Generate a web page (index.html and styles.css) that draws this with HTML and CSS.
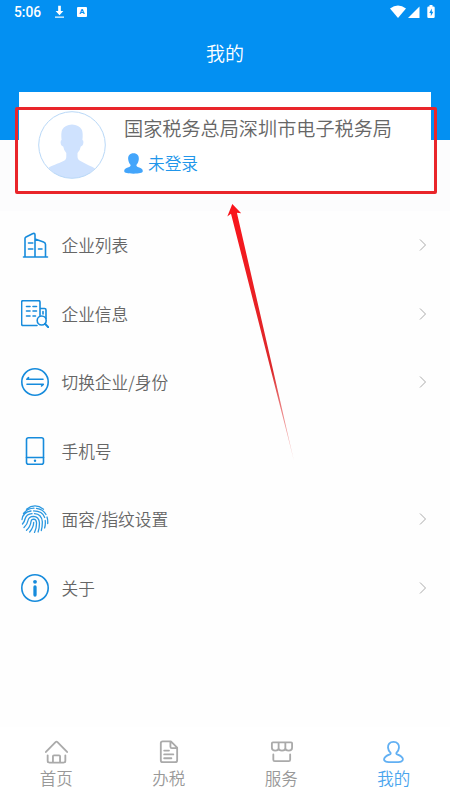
FILE: index.html
```
<!DOCTYPE html>
<html lang="zh-CN">
<head>
<meta charset="utf-8">
<meta name="viewport" content="width=device-width, initial-scale=1">
<title>我的</title>
<link rel="stylesheet" href="styles.css">
</head>
<body>
<div class="app">
  <header class="header">
    <div class="status">
      <span class="time">5:06</span>
      <svg class="download" viewBox="0 0 10 14"><path d="M3.500 0h3v6H9.300L5 10.500.7 6h2.800z" fill="currentColor"/><path d="M0 12.700h10" stroke="currentColor" stroke-width="1.300"/></svg>
      <span class="badge">A</span>
      <svg class="signals" viewBox="0 0 46 14">
        <path d="M0 3.500Q8 -2.500 16 3.500L8 13z" fill="currentColor"/>
        <path d="M29.500 1.500V13H18z" fill="currentColor"/>
        <path d="M39.500 1.500V0h3v1.500h1q1.200 0 1.200 1.200v9.100q0 1.200-1.200 1.200h-5q-1.200 0-1.200-1.200V2.700q0-1.200 1.200-1.200z" fill="currentColor"/>
        <path d="M41.800 3.500 39.300 8h1.500v3.200l2.500-4.500h-1.500z" fill="#0390f2"/>
      </svg>
    </div>
    <h1 class="title">我的</h1>
  </header>

  <section class="profile">
    <div class="card">
      <svg class="avatar" viewBox="0 0 68 68">
        <circle cx="34" cy="34" r="33.300" fill="#fff"/>
        <path d="M10.500 57C13 54.500 20 53 25.500 50q3-1.500 2.800-4.500V42q-2.300-2-3.100-6.500-2.400-.5-2.600-4-.1-2.500 1-2.500-.8-7 .6-10.200 2.800-5 9.800-5.300 7 .3 9.800 5.300 1.400 3.200.6 10.200 1.200 0 1 2.500-.3 3.500-2.600 4-.8 4.500-3.300 6.500v3.500q0 3 3 4.500 5.500 3 8.500 4.500 4 1.500 6 3Q48 67.300 34 67.300T10.500 57z" fill="#cfe2fe"/>
        <circle cx="34" cy="34" r="33.300" fill="none" stroke="#b9d8f7" stroke-width="1"/>
      </svg>
      <div class="info">
        <div class="name">国家税务总局深圳市电子税务局</div>
        <div class="login">
          <svg class="person" viewBox="0 0 20 22"><path d="M10 .3c4 0 5.900 2.500 5.600 6.200-.2 2.800-1.500 4.800-2.600 6 0 2 1.400 2 3.800 3 2.200.9 3.200 2 2.900 4C19.500 21 16 21.700 10 21.700S.5 21 .3 19.500c-.3-2 .7-3.100 2.900-4 2.400-1 3.800-1 3.800-3-1.100-1.200-2.400-3.200-2.600-6C4.100 2.800 6 .3 10 .3z" fill="currentColor"/></svg>
          <span>未登录</span>
        </div>
      </div>
    </div>
  </section>

  <ul class="menu">
    <li class="row">
      <svg class="icon" viewBox="0 0 28 28"><path d="M2.500 26h24M4 26V7.500Q4 6.500 5 6l6.500-3.300q2.500-1 2.500 1.300v22M14 8l8.500 3q2 .7 2 2.500V26M7.500 12h4.300M7.500 18h4.300M17.500 18H21"/></svg>
      <span class="label">企业列表</span><svg class="arrow" viewBox="0 0 8 12"><path d="M1 .5 6.500 6 1 11.500"/></svg>
    </li>
    <li class="row">
      <svg class="icon" viewBox="0 0 28 28"><path d="M16 25.500H2Q.6 25.500.6 24V2Q.6.600 2 .6h15.500q1.500 0 1.500 1.400v13.500M19 8.500h4.500q1.500 0 1.500 1.500v8.500M5.500 6.500H9M12 6.500h3.500M5.500 11H9M12 11h3.500M5.500 16H9M12 16h2.500M22 11.500v2.500"/><circle cx="20.700" cy="20.500" r="4.500"/><path d="m24 23.800 3.500 3.700" stroke-width="2"/></svg>
      <span class="label">企业信息</span><svg class="arrow" viewBox="0 0 8 12"><path d="M1 .5 6.500 6 1 11.500"/></svg>
    </li>
    <li class="row">
      <svg class="icon" viewBox="0 0 28 28"><circle cx="14" cy="14" r="13.200"/><path d="M7.500 9.600 5.800 11.300H22M6 16.300H22.300L20.500 18"/></svg>
      <span class="label">切换企业/身份</span><svg class="arrow" viewBox="0 0 8 12"><path d="M1 .5 6.500 6 1 11.500"/></svg>
    </li>
    <li class="row">
      <svg class="icon" viewBox="0 0 28 28"><rect x="5.500" y=".8" width="17" height="26.400" rx="2"/><path d="M5.500 20.500h17"/><circle cx="14" cy="23.800" r="1.200" fill="currentColor" stroke="none"/></svg>
      <span class="label">手机号</span>
    </li>
    <li class="row">
      <svg class="icon print" viewBox="0 0 28 28"><path d="M5.500 4.200Q14-2.300 22.500 4.200M2.500 8.500Q6.500 3.300 13 3.200M15.500 3.400Q22 4.300 25 9.500M1 14.500Q2 7 10 6M12.600 5.900Q21.500 6 23.700 12.500M26 12q1 3 .7 6.500M1.500 19Q3.600 16.500 4.200 13.500 5.500 9 11 8.600M13.500 8.600Q20.500 9 21.300 16.500 21.500 21 20.300 25.500M24.200 15.500Q24.700 19.500 23.600 23M3 22.500Q6.500 19 7 15.500q.8-4.200 5.500-4.200 5.300.2 5.900 6.200.2 5-1.300 9.500M5.500 25.200Q9.500 21.500 9.900 17q.4-2.900 2.800-2.900 2.500.2 2.800 3.400.2 5.500-2 10M8.700 27Q12.600 22.500 12.700 17.300"/></svg>
      <span class="label">面容/指纹设置</span><svg class="arrow" viewBox="0 0 8 12"><path d="M1 .5 6.500 6 1 11.500"/></svg>
    </li>
    <li class="row">
      <svg class="icon" viewBox="0 0 28 28"><circle cx="14" cy="14" r="13.200"/><circle cx="14" cy="7.800" r="1.900" fill="currentColor" stroke="none"/><path d="M14 13v8" stroke-width="3.300"/></svg>
      <span class="label">关于</span><svg class="arrow" viewBox="0 0 8 12"><path d="M1 .5 6.500 6 1 11.500"/></svg>
    </li>
  </ul>

  <nav class="tabs">
    <div class="tab"><svg viewBox="0 0 26 26"><path d="M2 13.500 12 3.200q1-.9 2 0l10 10.300M3.800 17v5.500q0 2 2 2h14.400q2 0 2-2V17M9.300 24.500V18q0-1 1-1h5.400q1 0 1 1v6.500"/></svg><span>首页</span></div>
    <div class="tab"><svg viewBox="0 0 26 26"><path d="M15.500 2.500H7q-2 0-2 2V22q0 2 2 2h13q2 0 2-2V9zM15 2.500V8q0 1.500 1.500 1.500H22M8.500 12h5M8.500 16H18M8.500 20H16"/></svg><span>办税</span></div>
    <div class="tab"><svg viewBox="0 0 26 26"><path d="M4 3.500h19q1 0 1 1V9q0 3-3.500 3T17 9.500V4M17 9.500Q17 12 13.500 12T10 9.500V4M10 9.500Q10 12 6.500 12T3 9V4.500q0-1 1-1M4.500 16v5.500q0 1.500 1.500 1.500h14.500q1.500 0 1.500-1.500V16"/></svg><span>服务</span></div>
    <div class="tab active"><svg viewBox="0 0 26 26"><path d="M13 3c4 0 6 2.700 5.700 6-.2 2.500-1.200 4-2.500 5.200-.6.700-.2 1.400.6 1.700 3.200 1.100 5.700 2.400 6 5.100.2 2.500-2 3-9.800 3s-10-.5-9.800-3c.3-2.700 2.800-4 6-5.100.8-.3 1.200-1 .6-1.700C8.500 13 7.500 11.500 7.300 9 7 5.700 9 3 13 3z"/></svg><span>我的</span></div>
  </nav>

  <div class="highlight"></div>
  <svg class="pointer" viewBox="0 0 68 260">
    <defs><linearGradient id="fade" x1="0" y1="0" x2="0" y2="1"><stop offset="0" stop-color="#fa141b"/><stop offset=".65" stop-color="#dc2a2c"/><stop offset="1" stop-color="#e88" stop-opacity=".4"/></linearGradient></defs>
    <path d="M5.300 0 14.200 9.300 9.900 8.700 67 257 4 9.800.300 12.500z" fill="url(#fade)"/>
  </svg>
</div>
</body>
</html>
```
FILE: styles.css
```
* { box-sizing: border-box; }
body {
  margin: 0;
  font-family: "Noto Sans CJK SC", "Noto Sans", sans-serif;
  font-weight: 350;
  color: #666;
  background: #fefefe;
}
.app {
  position: relative;
  width: 450px;
  height: 800px;
  display: flex;
  flex-direction: column;
  overflow: hidden;
}
.header {
  flex: none;
  height: 140px;
  background: #0390f2;
  color: #fff;
}
.status {
  display: flex;
  align-items: center;
  height: 24px;
  padding: 0 15px 0 14px;
}
.time {
  width: 41px;
  font: 500 13.800px/25px Roboto, sans-serif;
}
.download { width: 9px; height: 14px; }
.badge {
  width: 10px;
  height: 10px;
  margin-left: 13px;
  border-radius: 1px;
  background: #fff;
  color: #0390f2;
  font: 700 8px/10px Roboto, sans-serif;
  text-align: center;
}
.signals { width: 46px; height: 14px; margin-left: auto; margin-right: -1px; }
.title {
  margin: 15px 0 0;
  font-size: 19px;
  font-weight: 350;
  line-height: 28px;
  text-align: center;
}
.profile {
  flex: none;
  height: 71px;
  padding: 0 19px;
  background: #fcfcfd;
}
.card {
  display: flex;
  height: 101px;
  margin-top: -48px;
  padding: 19px 0 0 19px;
  background: #fff;
}
.avatar { width: 68px; height: 68px; }
.info { margin-left: 18px; }
.name {
  margin-top: 3px;
  font-size: 19.150px;
  line-height: 28px;
  white-space: nowrap;
}
.login {
  display: flex;
  align-items: center;
  gap: 5px;
  height: 24px;
  margin-top: 9px;
  color: #2196ea;
  font-size: 16.700px;
}
.person { width: 19px; height: 21px; color: #43a5fb; }
.menu {
  flex: none;
  height: 516px;
  margin: 0;
  padding: 0;
  list-style: none;
}
.row {
  display: flex;
  align-items: center;
  height: 68.500px;
  padding: 0 23px 0 21px;
}
.icon {
  width: 28px;
  height: 28px;
  color: #168bdc;
  fill: none;
  stroke: currentColor;
  stroke-width: 1.600;
  stroke-linecap: round;
  stroke-linejoin: round;
}
.print { stroke-width: 1.300; color: #2b98e0; }
.label { margin-left: 12.500px; font-size: 16.700px; line-height: 24px; }
.arrow {
  width: 8px;
  height: 12px;
  margin-left: auto;
  fill: none;
  stroke: #aaa;
  stroke-width: 1;
}
.tabs {
  flex: 1;
  display: grid;
  grid-template-columns: repeat(4, 1fr);
  background: #fff;
}
.tab {
  display: flex;
  flex-direction: column;
  align-items: center;
  padding-top: 12px;
  color: #999;
  font-size: 16.500px;
  line-height: 24px;
}
.tab svg {
  width: 25px;
  height: 25px;
  margin-bottom: 2px;
  fill: none;
  stroke: #aaa;
  stroke-width: 1.900;
  stroke-linecap: round;
  stroke-linejoin: round;
}
.tab.active { color: #4aa5ee; }
.tab.active svg { stroke: #62b0f3; }
.highlight {
  position: absolute;
  left: 15px;
  top: 107px;
  width: 421.500px;
  height: 87px;
  border: 3px solid #e9252a;
  border-radius: 2px;
}
.pointer {
  position: absolute;
  left: 227px;
  top: 203.500px;
  width: 68px;
  height: 260px;
}
```
